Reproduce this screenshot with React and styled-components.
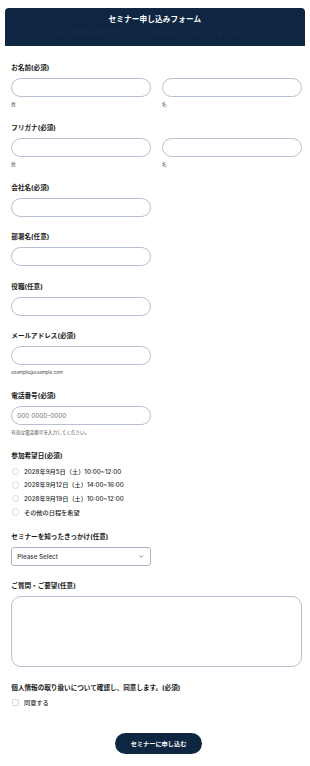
import React from "react";
import styled, { createGlobalStyle } from "styled-components";

const Global = createGlobalStyle`
  html, body { margin: 0; padding: 0; background: #ffffff; }
  body {
    font-family: Inter, "Noto Sans CJK JP", "Noto Sans", sans-serif;
    color: #1c1c1c;
    -webkit-font-smoothing: antialiased;
  }
  * { box-sizing: border-box; }
`;

const Page = styled.div`
  padding: 8.3px 5.3px 12px 5px;
`;

const Header = styled.header`
  background: #0e2641;
  border-radius: 4px 4px 0 0;
  padding: 6.7px 8px 8.9px;
  display: flex;
  flex-direction: column;
  align-items: center;
`;

const Title = styled.h1`
  margin: 0;
  font-size: 7.6px;
  line-height: 10px;
  height: 10px;
  font-weight: 700;
  color: #ffffff;
  letter-spacing: 0.02em;
`;

const Subtitle = styled.p`
  margin: 4.8px 0 0;
  font-size: 5.4px;
  line-height: 7px;
  height: 7px;
  color: rgba(255, 255, 255, 0.07);
  white-space: nowrap;
`;

const Form = styled.form`
  padding: 18px 3px 0 6.3px;
  display: flex;
  flex-direction: column;
`;

const Field = styled.div`
  display: flex;
  flex-direction: column;
  margin-bottom: 16.3px;
`;

const Label = styled.div`
  font-size: 6.6px;
  line-height: 9px;
  height: 9px;
  font-weight: 700;
  color: #1a1a1a;
  margin-bottom: 5px;
  white-space: nowrap;
`;

const Row = styled.div`
  display: grid;
  grid-template-columns: 1fr 1fr;
  column-gap: 11px;
`;

const Col = styled.div`
  display: flex;
  flex-direction: column;
`;

const Half = styled.div`
  width: 139.5px;
  display: flex;
  flex-direction: column;
`;

const Input = styled.input`
  display: block;
  width: 100%;
  height: 19px;
  border: 1px solid #b5c1d1;
  border-radius: 10px;
  background: #fff;
  padding: 0 5px;
  font-family: Inter, "Noto Sans CJK JP", sans-serif;
  font-size: 6.4px;
  color: #333;
  outline: none;
  &::placeholder { color: #6b6f75; }
`;

const Helper = styled.div`
  margin-top: 3.9px;
  font-size: 4.6px;
  line-height: 7px;
  height: 7px;
  color: #4a4a4a;
  white-space: nowrap;
`;

const Options = styled.div`
  display: flex;
  flex-direction: column;
  gap: 3.6px;
`;

const Option = styled.label`
  display: flex;
  align-items: center;
  height: 10px;
  gap: 4.7px;
  font-size: 6.2px;
  font-weight: 500;
  color: #2a2a2a;
  padding-left: 0.4px;
  white-space: nowrap;
`;

const Radio = styled.input.attrs({ type: "radio" })`
  appearance: none;
  margin: 0;
  width: 7.6px;
  height: 7.6px;
  border: 1px solid #d6dae0;
  border-radius: 50%;
  background: #fff;
  flex: none;
`;

const Check = styled.input.attrs({ type: "checkbox" })`
  appearance: none;
  margin: 0;
  width: 7.6px;
  height: 7.6px;
  border: 1px solid #d6dae0;
  border-radius: 1px;
  background: #fff;
  flex: none;
`;

const SelectWrap = styled.div`
  position: relative;
  width: 139.5px;
  height: 18.8px;
`;

const Select = styled.select`
  appearance: none;
  display: block;
  width: 100%;
  height: 100%;
  border: 1px solid #a9b6c7;
  border-radius: 3px;
  background: #fff;
  padding: 0 5px;
  font-family: Inter, "Noto Sans CJK JP", sans-serif;
  font-size: 6.3px;
  font-weight: 500;
  color: #3a3a3a;
  outline: none;
`;

const Chevron = styled.svg`
  position: absolute;
  display: block;
  right: 7px;
  top: 50%;
  margin-top: -1.5px;
  width: 4.5px;
  height: 3px;
  pointer-events: none;
`;

const TextArea = styled.textarea`
  width: 100%;
  height: 70.8px;
  border: 1px solid #b5c1d1;
  border-radius: 10px;
  resize: none;
  padding: 5px;
  font-family: Inter, "Noto Sans CJK JP", sans-serif;
  font-size: 6.3px;
  outline: none;
  display: block;
`;

const Actions = styled.div`
  display: flex;
  justify-content: center;
  margin-top: 9px;
  padding-left: 4px;
`;

const Submit = styled.button`
  height: 21px;
  width: 86.5px;
  border: none;
  border-radius: 11px;
  background: #0e2641;
  color: #fff;
  font-family: Inter, "Noto Sans CJK JP", sans-serif;
  font-size: 6.2px;
  font-weight: 700;
  cursor: pointer;
  padding: 0;
`;

const dates = [
  "2028年9月5日（土）10:00~12:00",
  "2028年9月12日（土）14:00~16:00",
  "2028年9月19日（土）10:00~12:00",
  "その他の日程を希望",
];

function SingleField({ label, helper, placeholder }) {
  return (
    <Field>
      <Label>{label}</Label>
      <Half>
        <Input placeholder={placeholder} />
        {helper && <Helper>{helper}</Helper>}
      </Half>
    </Field>
  );
}

function NameField({ label }) {
  return (
    <Field>
      <Label>{label}</Label>
      <Row>
        <Col>
          <Input />
          <Helper>姓</Helper>
        </Col>
        <Col>
          <Input />
          <Helper>名</Helper>
        </Col>
      </Row>
    </Field>
  );
}

export default function App() {
  return (
    <>
      <Global />
      <Page>
        <Header>
          <Title>セミナー申し込みフォーム</Title>
          <Subtitle>セミナーへの参加をご希望の方は、以下の必要事項をご入力のうえ、お申し込みください。</Subtitle>
        </Header>
        <Form onSubmit={(e) => e.preventDefault()}>
          <NameField label="お名前(必須)" />
          <NameField label="フリガナ(必須)" />
          <SingleField label="会社名(必須)" />
          <SingleField label="部署名(任意)" />
          <SingleField label="役職(任意)" />
          <SingleField label="メールアドレス(必須)" helper="example@esample.com" />
          <SingleField label="電話番号(必須)" placeholder="000 0000-0000" helper="有効な電話番号を入力してください。" />
          <Field>
            <Label>参加希望日(必須)</Label>
            <Options>
              {dates.map((d) => (
                <Option key={d}>
                  <Radio name="date" />
                  {d}
                </Option>
              ))}
            </Options>
          </Field>
          <Field>
            <Label>セミナーを知ったきっかけ(任意)</Label>
            <SelectWrap>
              <Select defaultValue="">
                <option value="">Please Select</option>
              </Select>
              <Chevron viewBox="0 0 6 4">
                <path d="M0.6 0.6 L3 3 L5.4 0.6" fill="none" stroke="#555" strokeWidth="0.9" />
              </Chevron>
            </SelectWrap>
          </Field>
          <Field>
            <Label>ご質問・ご要望(任意)</Label>
            <TextArea />
          </Field>
          <Field>
            <Label>個人情報の取り扱いについて確認し、同意します。(必須)</Label>
            <Option>
              <Check />
              同意する
            </Option>
          </Field>
          <Actions>
            <Submit type="submit">セミナーに申し込む</Submit>
          </Actions>
        </Form>
      </Page>
    </>
  );
}
